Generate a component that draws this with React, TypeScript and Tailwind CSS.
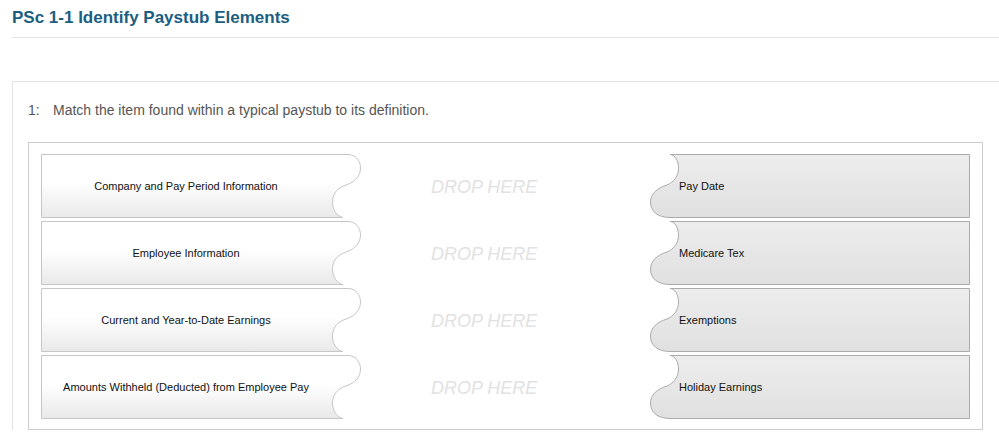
const pairs = [
  { item: 'Company and Pay Period Information', answer: 'Pay Date' },
  { item: 'Employee Information', answer: 'Medicare Tex' },
  { item: 'Current and Year-to-Date Earnings', answer: 'Exemptions' },
  { item: 'Amounts Withheld (Deducted) from Employee Pay', answer: 'Holiday Earnings' },
];

const LEFT_PATH =
  'M0.5,0.5 H307 C314.5,0.5 319.5,6.5 319.5,14 C319.5,22 314,28 305,31 C296,34 291.5,40 291.5,48 C291.5,56 296,62.5 302,63.5 H0.5 Z';
const RIGHT_PATH =
  'M319.5,0.5 H20 C25,0.5 28.5,7 28.5,14 C28.5,22 24,28 17,31 C7,34 0.5,40 0.5,48 C0.5,57 7,63.5 20,63.5 H319.5 Z';

function ItemCard({ label, index }: { label: string; index: number }) {
  const id = `item-grad-${index}`;
  return (
    <div className="relative h-16 w-[320px] shrink-0">
      <svg className="absolute inset-0" width="320" height="64" viewBox="0 0 320 64">
        <defs>
          <linearGradient id={id} x1="0" y1="0" x2="0" y2="1">
            <stop offset="0" stopColor="#ffffff" />
            <stop offset="0.45" stopColor="#ffffff" />
            <stop offset="1" stopColor="#e9e9e9" />
          </linearGradient>
        </defs>
        <path d={LEFT_PATH} fill={`url(#${id})`} stroke="#c6c6c6" strokeWidth="1" />
      </svg>
      <div className="relative flex h-full w-[290px] items-center justify-center text-[11px] text-[#111]">
        {label}
      </div>
    </div>
  );
}

function AnswerCard({ label, index }: { label: string; index: number }) {
  const id = `answer-grad-${index}`;
  return (
    <div className="relative h-16 w-[320px] shrink-0">
      <svg className="absolute inset-0" width="320" height="64" viewBox="0 0 320 64">
        <defs>
          <linearGradient id={id} x1="0" y1="0" x2="0" y2="1">
            <stop offset="0" stopColor="#ededed" />
            <stop offset="1" stopColor="#e0e0e0" />
          </linearGradient>
        </defs>
        <path d={RIGHT_PATH} fill={`url(#${id})`} stroke="#ababab" strokeWidth="1" />
      </svg>
      <div className="relative flex h-full items-center pl-[29px] text-[11px] text-[#111]">{label}</div>
    </div>
  );
}

export default function App() {
  return (
    <div className="h-[443px] overflow-hidden bg-white font-['Liberation_Sans',Arial,sans-serif]">
      <div className="ml-3">
        <h1 className="border-b border-[#e5e5e5] pt-[9px] pb-[10px] text-[17px] leading-[18px] font-bold text-[#1b5e7f]">
          PSc 1-1 Identify Paystub Elements
        </h1>

        <div className="mt-[43px] border-t border-l border-[#e3e3e3] pl-[15px] pt-5">
          <p className="flex text-[14px] leading-4 text-[#555]">
            <span className="w-[25px]">1:</span>
            <span>Match the item found within a typical paystub to its definition.</span>
          </p>

          <div className="mt-6 w-[955px] border border-[#cccccc] px-3 pt-[11px] pb-[10px]">
            <div className="flex flex-col gap-[3px]">
              {pairs.map((p, i) => (
                <div key={p.item} className="flex h-16 items-center">
                  <ItemCard label={p.item} index={i} />
                  <div className="flex h-full flex-1 items-center pl-[70px] pt-[2px]">
                    <span className="text-[18px] italic text-[#e2e2e2]">DROP HERE</span>
                  </div>
                  <AnswerCard label={p.answer} index={i} />
                </div>
              ))}
            </div>
          </div>
        </div>
      </div>
    </div>
  );
}
